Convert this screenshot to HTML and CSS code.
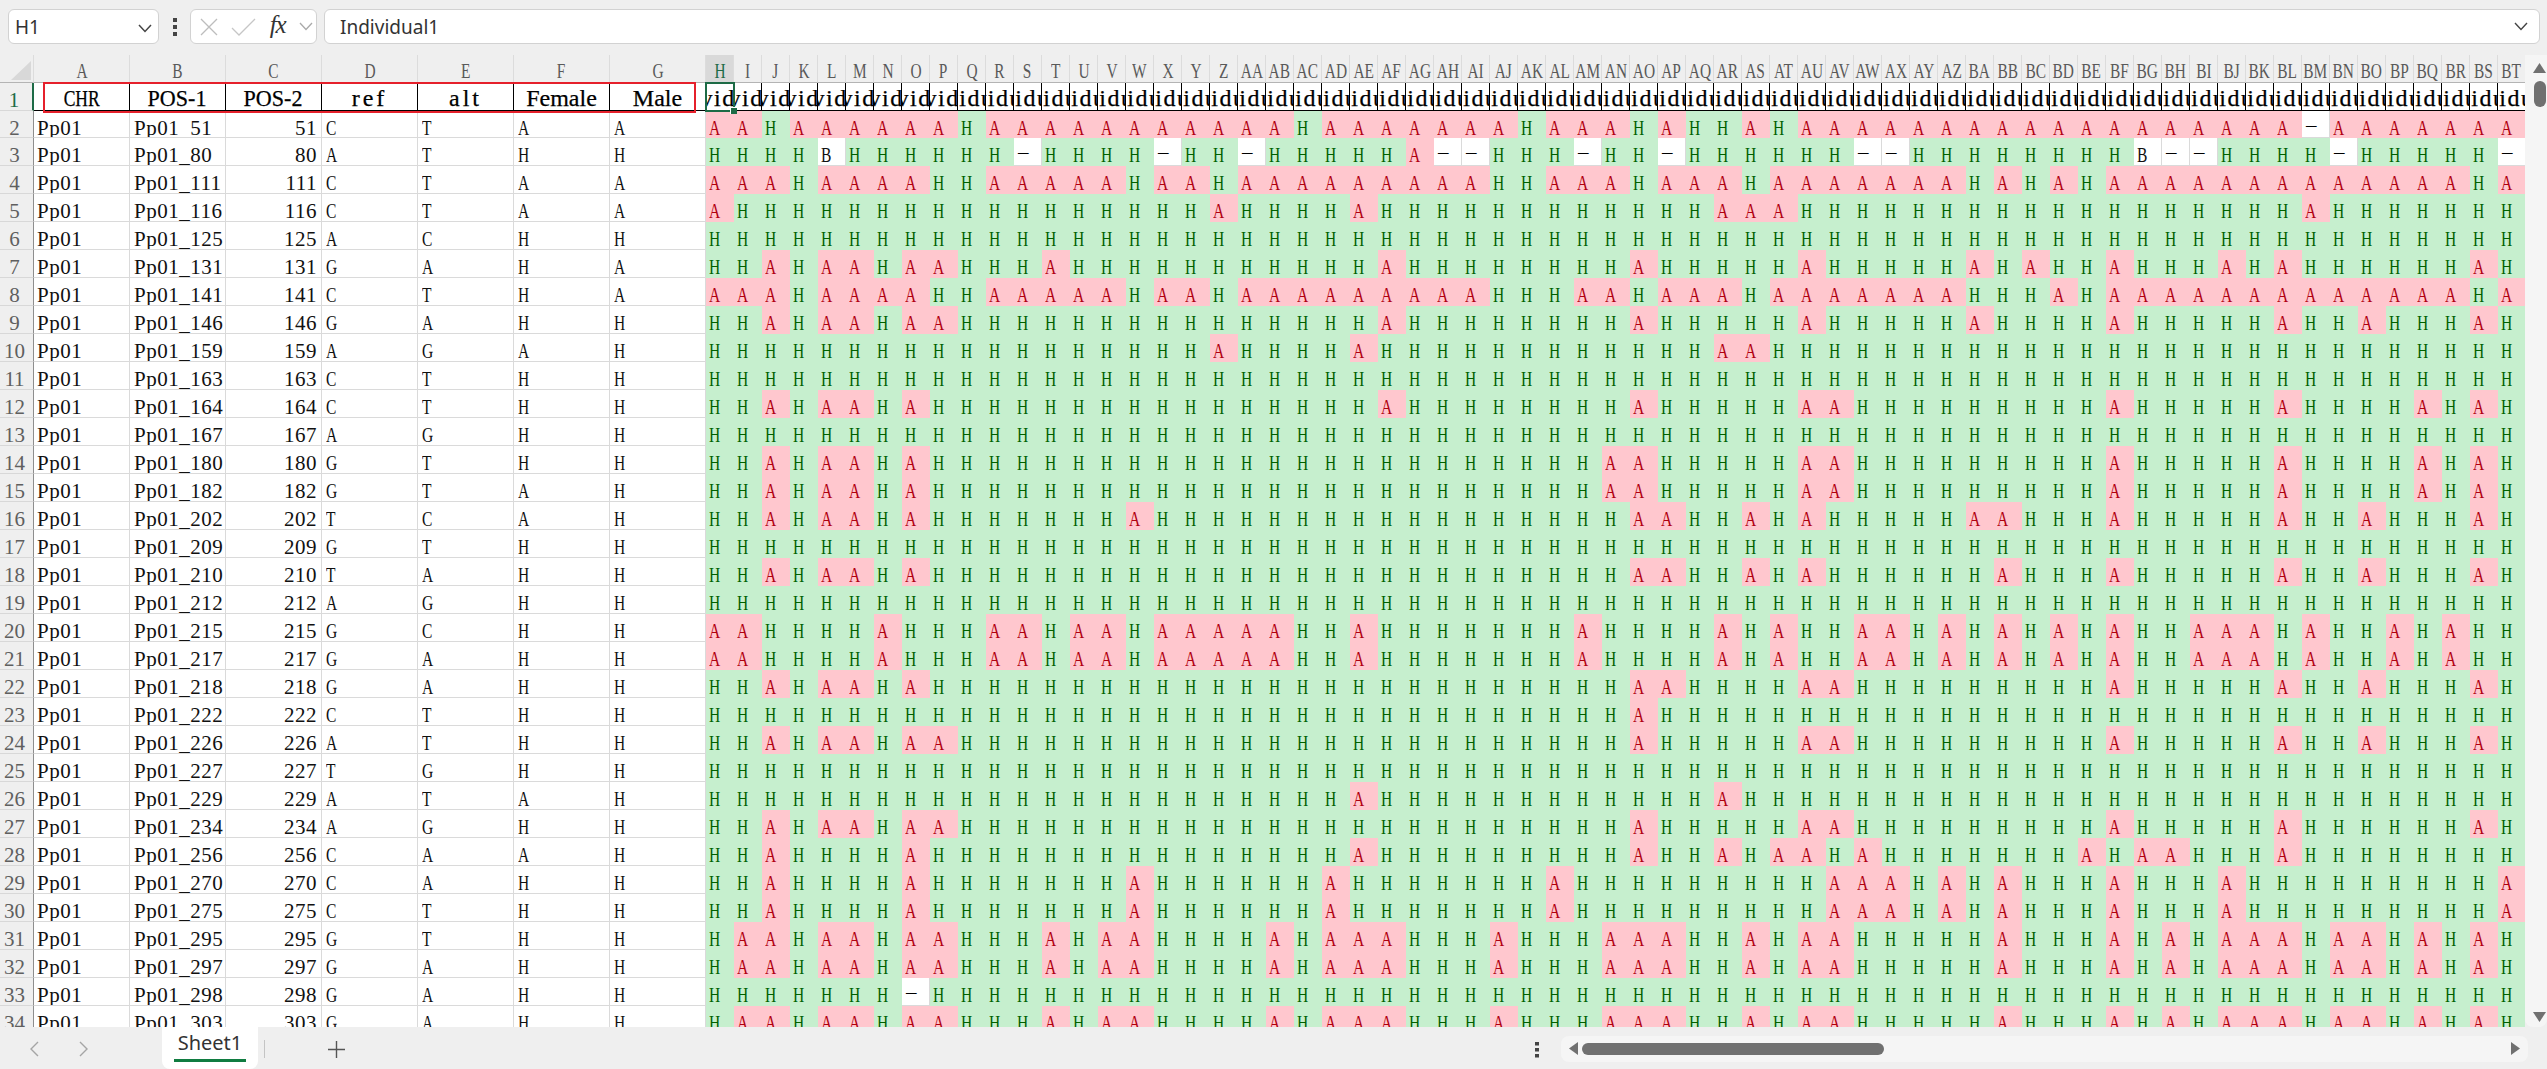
FILE: index.html
```html
<!DOCTYPE html>
<html lang="en">
<head>
<meta charset="utf-8">
<title>Sheet1</title>
<link rel="stylesheet" href="styles.css">
</head>
<body>
<div class="app">
  <header class="toolbar">
    <div class="namebox">
      <span>H1</span>
      <svg class="chev" width="14" height="9" viewBox="0 0 14 9"><path d="M1 1l6 6.5L13 1" fill="none" stroke="#444" stroke-width="1.5"/></svg>
    </div>
    <svg class="vdots" width="4" height="18" viewBox="0 0 4 18"><path d="M0 0h4v4H0zM0 7h4v4H0zM0 14h4v4H0z" fill="#444"/></svg>
    <div class="fxbox">
      <svg width="18" height="18" viewBox="0 0 18 18"><path d="M1 1l16 16M17 1L1 17" fill="none" stroke="#bdbdbd" stroke-width="1.3"/></svg>
      <svg width="25" height="18" viewBox="0 0 25 18"><path d="M1 10l7 7L24 1" fill="none" stroke="#c6c6c6" stroke-width="1.3"/></svg>
      <span class="fx">fx</span>
      <svg width="14" height="9" viewBox="0 0 14 9"><path d="M1 1l6 6.5L13 1" fill="none" stroke="#aaa" stroke-width="1.3"/></svg>
    </div>
    <div class="formula">
      <span>Individual1</span>
      <svg width="14" height="9" viewBox="0 0 14 9"><path d="M1 1l6 6.5L13 1" fill="none" stroke="#444" stroke-width="1.4"/></svg>
    </div>
  </header>

  <main class="sheet">
    <div class="view">
      <div class="grid" id="grid"></div>
      <svg class="corner" width="21" height="19" viewBox="0 0 21 19"><path d="M0 19L20 0v19z" fill="#d8d8d8"/></svg>
      <div class="redbox"></div>
      <div class="active"><i class="handle"></i></div>
    </div>
    <aside class="vscroll">
      <svg width="13" height="10" viewBox="0 0 13 10"><path d="M6.500 0L13 10H0z" fill="#707070"/></svg>
      <div class="vthumb"></div>
      <svg width="13" height="10" viewBox="0 0 13 10"><path d="M0 0h13L6.500 10z" fill="#707070"/></svg>
    </aside>
  </main>

  <footer class="tabbar">
    <svg class="nav" width="9" height="16" viewBox="0 0 9 16"><path d="M8 1L1 8l7 7" fill="none" stroke="#a5a5a5" stroke-width="1.4"/></svg>
    <svg class="nav nav2" width="9" height="16" viewBox="0 0 9 16"><path d="M1 1l7 7-7 7" fill="none" stroke="#a5a5a5" stroke-width="1.4"/></svg>
    <div class="tab"><span>Sheet1</span></div>
    <div class="tabsep"></div>
    <svg class="plus" width="17" height="17" viewBox="0 0 17 17"><path d="M8.500 0v17M0 8.500h17" fill="none" stroke="#555" stroke-width="1.4"/></svg>
    <svg class="hdots" width="4" height="16" viewBox="0 0 4 16"><path d="M0 0h4v3.500H0zM0 6h4v3.500H0zM0 12h4v3.500H0z" fill="#444"/></svg>
    <div class="hscroll">
      <svg width="9" height="13" viewBox="0 0 9 13"><path d="M9 0v13L0 6.500z" fill="#707070"/></svg>
      <div class="hthumb"></div>
      <svg class="harrow" width="9" height="13" viewBox="0 0 9 13"><path d="M0 0v13l9-6.500z" fill="#707070"/></svg>
    </div>
  </footer>
</div>
<script src="script.js"></script>
</body>
</html>
```
FILE: styles.css
```css
* { box-sizing: border-box; }
html, body { margin: 0; height: 100%; overflow: hidden; background: #efefef; }
.app { width: 2547px; height: 1069px; display: flex; flex-direction: column; }

/* formula bar */
.toolbar { height: 55px; flex: none; display: flex; align-items: flex-start; padding: 9px 7px 0 8px; font: 19px "Noto Sans", sans-serif; color: #333; }
.namebox, .fxbox, .formula { height: 35px; background: #fff; border: 1px solid #d2d2d2; border-radius: 6px; display: flex; align-items: center; }
.namebox { width: 151px; padding: 0 6px 0 6px; justify-content: space-between; }
.namebox .chev { margin-top: 3px; }
.vdots { margin: 9px 13px 0 14px; }
.fxbox { width: 127px; padding: 0 3px 0 9px; margin-right: 7px; justify-content: space-between; }
.fx { font: italic 25px "Liberation Serif", serif; color: #333; margin-top: -3px; letter-spacing: -1px; }
.formula { flex: 1; padding: 0 11px 0 15px; justify-content: space-between; }

/* sheet */
.sheet { flex: 1; min-height: 0; display: flex; }
.view { flex: 1; min-width: 0; position: relative; overflow: hidden; background: #fff; }
.grid { display: grid; width: 2526px; grid-template-columns: 34px repeat(7, 96px) repeat(65, 28px); grid-template-rows: 28px 28px 27px; grid-auto-rows: 28px; font: 21px "Liberation Serif", serif; color: #111; }
.c { overflow: hidden; white-space: nowrap; line-height: 34px; letter-spacing: .5px; padding-left: 4px; border-right: 1px solid #dadada; border-bottom: 1px solid #dadada; }
.c.txt { padding-left: 3px; }
.c.num { text-align: right; padding: 0 4px 0 0; }
.up { display: inline-block; letter-spacing: 0; transform: scaleX(.74); transform-origin: 0 50%; }

/* column and row headings */
.ch { background: #efefef; border-right: 1px solid #dcdcdc; border-bottom: 1px solid #b4b4b4; display: flex; justify-content: center; overflow: hidden; font-size: 22px; line-height: 31px; color: #595959; }
.ch span { display: block; transform: scaleX(.7); flex: none; }
.ch.sel { background: #d9d9d9; color: #1d6b46; }
.rh { background: #efefef; border-right: 1px solid #8e8e8e; border-bottom: 1px solid #d8d8d8; padding-right: 4px; text-align: center; overflow: hidden; line-height: 34px; color: #5f5f5f; }
.rh.sel { color: #1d6b46; border-right: 2px solid #1d6b46; }

/* header row */
.hd { border-right: 1px solid #000; border-bottom: 1px solid #000; display: flex; justify-content: center; overflow: hidden; white-space: nowrap; font-size: 24px; line-height: 30px; color: #000; background: #fff; -webkit-text-stroke: .25px #000; }
.hd span { flex: none; display: block; }
.hd.id { letter-spacing: 1.5px; }
.hd .w1 { transform: scaleX(.73); }
.hd .w2 { transform: scaleX(.92); }
.hd .w3 { letter-spacing: 3px; }

/* genotype cells */
.g, .a { border: 0; padding-left: 3px; }
.g { background: #c6efce; color: #006100; }
.a { background: #ffc7ce; color: #b00010; }
.o { padding-left: 3px; color: #111; }
.d { padding-left: 4px; line-height: 28px; color: #000; }

/* overlays */
.corner { position: absolute; left: 11px; top: 6px; }
.redbox { position: absolute; left: 43px; top: 27px; width: 653px; height: 31px; border: 2px solid #e5202b; pointer-events: none; }
.active { position: absolute; left: 705px; top: 27px; width: 30px; height: 30px; border: 2px solid #1d6b46; }
.handle { position: absolute; right: -4px; bottom: -4px; width: 7px; height: 7px; background: #1d6b46; border: 1px solid #fff; border-width: 1px 0 0 1px; }

/* vertical scrollbar */
.vscroll { width: 22px; flex: none; background: #f5f5f5; border-radius: 0 0 8px 8px; padding: 8px 1px 5px 8px; display: flex; flex-direction: column; align-items: center; }
.vthumb { width: 12px; height: 26px; border-radius: 6px; background: #707070; margin: 8px 0 auto; }

/* sheet tabs */
.tabbar { height: 42px; flex: none; display: flex; align-items: center; font: 20px "Noto Sans", sans-serif; color: #333; }
.nav { margin-left: 30px; margin-top: 1px; }
.nav2 { margin-left: 40px; }
.tab { width: 96px; height: 42px; margin-left: 74px; background: #fff; border-radius: 0 0 8px 8px; display: flex; justify-content: center; }
.tab span { width: 72px; height: 35px; text-align: center; line-height: 32px; border-bottom: 3px solid #107c41; }
.tabsep { width: 1px; height: 18px; background: #c4c4c4; margin: 2px 0 0 6px; }
.plus { margin-left: 63px; margin-top: 2px; }
.hdots { margin-left: 1190px; margin-top: 3px; }
.hscroll { width: 967px; height: 26px; margin: 1px 0 0 22px; background: #f5f5f5; border-radius: 8px; display: flex; align-items: center; padding: 0 8px; }
.hthumb { width: 302px; height: 12px; border-radius: 6px; background: #707070; margin-left: 4px; }
.harrow { margin-left: auto; }
```
FILE: script.js
```js
(function () {
  // Sites in columns A–G: position, ref, alt, Female, Male
  var sites = "51CTAA 80ATHH 111CTAA 116CTAA 125ACHH 131GAHA 141CTHA 146GAHH 159AGAH 163CTHH 164CTHH 167AGHH 180GTHH 182GTAH 202TCAH 209GTHH 210TAHH 212AGHH 215GCHH 217GAHH 218GAHH 222CTHH 226ATHH 227TGHH 229ATAH 234AGHH 256CAAH 270CAHH 275CTHH 295GTHH 297GAHH 298GAHH 303GAHH".split(" ");

  // Individuals homozygous "A" per row (column index from H = 0); everything else is "H"
  var r31 = "1-2,4-5,7-8,12,14-15,20,22-24,28,32-34,37,39-40,46,50,52,54-56,58-59,61,63";
  var r29 = "2,7,15,22,30,40-42,44,46,50,54,64";
  var r20 = "0-1,6,10-11,13-14,16-20,23,31,36,38,41-42,44,46,48,50,53-55,57,60,62";
  var r14 = "2,4-5,7,32-33,39-40,50,56,61,63";
  var calls = [
    "0-1,3-8,10-20,22-28,30-32,34,37,39-56,58-64",
    "25",
    "0-2,4-7,10-14,16-17,19-27,30-32,34-36,38-44,46,48,50-62,64",
    "0,18,23,36-38,57",
    "",
    "2,4-5,7-8,12,24,33,39,45,47,50,54,56,63",
    "0-2,4-7,10-14,16-17,19-27,31-32,34-36,38-44,48,50-62,64",
    "2,4-5,7-8,24,33,39,45,50,56,59,63",
    "18,23,36-37",
    "",
    "2,4-5,7,24,33,39-40,50,56,61,63",
    "",
    r14,
    r14,
    "2,4-5,7,15,33-34,37,39,45-46,50,56,59,63",
    "",
    "2,4-5,7,33-34,37,39,46,50,56,59,63",
    "",
    r20,
    r20,
    "2,4-5,7,33-34,39-40,50,56,59,63",
    "33",
    "2,4-5,7-8,33,39-40,50,56,59,63",
    "",
    "23,36",
    "2,4-5,7-8,33,39-40,50,56,63",
    "2,7,23,33,36,38-39,41,49,51-52,56",
    r29,
    r29,
    r31,
    r31,
    "",
    r31
  ];
  // Cells that are neither A nor H, keyed by sheet row
  var other = {
    3: { 4: "B", 51: "B", 11: "-", 16: "-", 19: "-", 26: "-", 27: "-", 31: "-", 34: "-", 41: "-", 42: "-", 52: "-", 53: "-", 58: "-", 64: "-" },
    2: { 57: "-" },
    33: { 7: "-" }
  };

  function colName(i) {
    var s = "";
    i += 1;
    while (i > 0) { var m = (i - 1) % 26; s = String.fromCharCode(65 + m) + s; i = (i - m - 1) / 26; }
    return s;
  }
  function expand(list) {
    var set = {};
    if (!list) return set;
    list.split(",").forEach(function (p) {
      var b = p.split("-"), from = +b[0], to = +(b[1] || b[0]);
      for (var k = from; k <= to; k++) set[k] = 1;
    });
    return set;
  }
  function up(t) { return '<span class="up">' + t + "</span>"; }

  var h = ['<div class="ch"></div>'];
  for (var c = 0; c < 72; c++) {
    h.push('<div class="ch' + (c === 7 ? " sel" : "") + '"><span>' + colName(c) + "</span></div>");
  }

  h.push('<div class="rh sel">1</div>');
  [["CHR", "w1"], ["POS-1", "w2"], ["POS-2", "w2"], ["ref", "w3"], ["alt", "w3"], ["Female", ""], ["Male", ""]].forEach(function (t) {
    h.push('<div class="hd"><span class="' + t[1] + '">' + t[0] + "</span></div>");
  });
  for (var n = 1; n <= 65; n++) {
    h.push('<div class="hd id"><span>Individual' + n + "</span></div>");
  }

  sites.forEach(function (s, i) {
    var row = i + 2, m = s.match(/^(\d+)(.)(.)(.)(.)$/), set = expand(calls[i]), ex = other[row] || {};
    h.push('<div class="rh">' + row + "</div>");
    h.push('<div class="c txt">Pp01</div>');
    h.push('<div class="c">Pp01_' + m[1] + "</div>");
    h.push('<div class="c num">' + m[1] + "</div>");
    for (var k = 2; k <= 5; k++) h.push('<div class="c">' + up(m[k]) + "</div>");
    for (var g = 0; g < 65; g++) {
      if (ex[g] === "-") h.push('<div class="c o d">\u2013</div>');
      else if (ex[g]) h.push('<div class="c o">' + up(ex[g]) + "</div>");
      else if (set[g]) h.push('<div class="c a">' + up("A") + "</div>");
      else h.push('<div class="c g">' + up("H") + "</div>");
    }
  });
  document.getElementById("grid").innerHTML = h.join("");
})();
```
